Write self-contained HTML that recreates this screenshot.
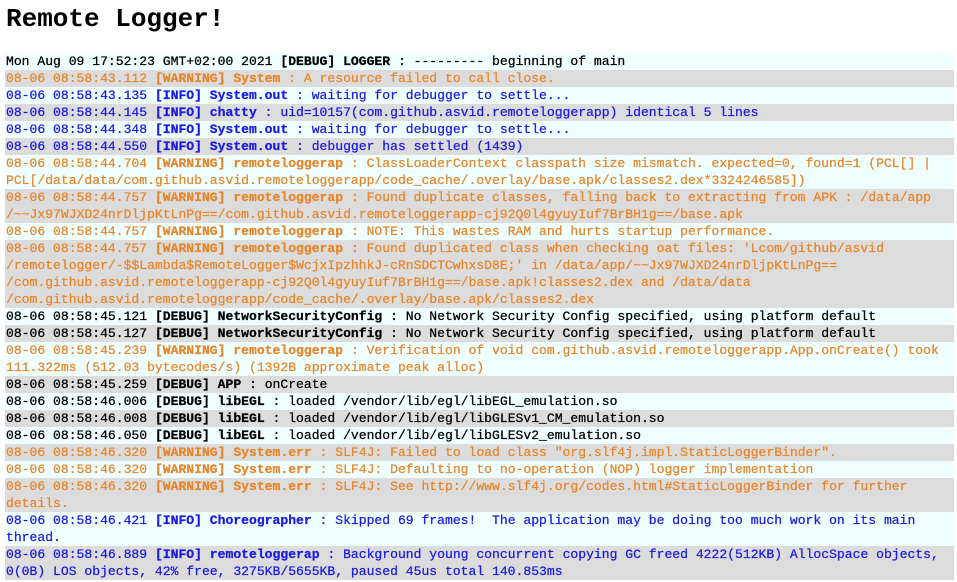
<!DOCTYPE html>
<html><head><meta charset="utf-8"><style>
html,body{margin:0;padding:0;background:#fff;}
body{width:957px;height:582px;overflow:hidden;font-family:"Liberation Mono",monospace;}
h1{margin:0;position:absolute;left:6px;top:2px;font-size:26px;line-height:34px;font-weight:bold;color:#000;}
#log{position:absolute;left:5px;top:53px;width:949px;font-size:13.07px;line-height:17px;-webkit-text-stroke:0.25px currentColor;}
.r{padding-left:1px;white-space:pre;}
.r:nth-child(odd){background:#f0ffff;}
.r:nth-child(even){background:#dcdcdc;}
.d{color:#000}.w{color:#e8862a}.i{color:#1a1ae6}
b{font-weight:bold}
</style></head><body>
<h1>Remote Logger!</h1>
<div id="log">
<div class="r d">Mon Aug 09 17:52:23 GMT+02:00 2021 <b>[DEBUG] LOGGER</b> : --------- beginning of main</div>
<div class="r w">08-06 08:58:43.112 <b>[WARNING] System</b> : A resource failed to call close.</div>
<div class="r i">08-06 08:58:43.135 <b>[INFO] System.out</b> : waiting for debugger to settle...</div>
<div class="r i">08-06 08:58:44.145 <b>[INFO] chatty</b> : uid=10157(com.github.asvid.remoteloggerapp) identical 5 lines</div>
<div class="r i">08-06 08:58:44.348 <b>[INFO] System.out</b> : waiting for debugger to settle...</div>
<div class="r i">08-06 08:58:44.550 <b>[INFO] System.out</b> : debugger has settled (1439)</div>
<div class="r w">08-06 08:58:44.704 <b>[WARNING] remoteloggerap</b> : ClassLoaderContext classpath size mismatch. expected=0, found=1 (PCL[] |
PCL[/data/data/com.github.asvid.remoteloggerapp/code_cache/.overlay/base.apk/classes2.dex*3324246585])</div>
<div class="r w">08-06 08:58:44.757 <b>[WARNING] remoteloggerap</b> : Found duplicate classes, falling back to extracting from APK : /data/app
/~~Jx97WJXD24nrDljpKtLnPg==/com.github.asvid.remoteloggerapp-cj92Q0l4gyuyIuf7BrBH1g==/base.apk</div>
<div class="r w">08-06 08:58:44.757 <b>[WARNING] remoteloggerap</b> : NOTE: This wastes RAM and hurts startup performance.</div>
<div class="r w">08-06 08:58:44.757 <b>[WARNING] remoteloggerap</b> : Found duplicated class when checking oat files: 'Lcom/github/asvid
/remotelogger/-$$Lambda$RemoteLogger$WcjxIpzhhkJ-cRnSDCTCwhxsD8E;' in /data/app/~~Jx97WJXD24nrDljpKtLnPg==
/com.github.asvid.remoteloggerapp-cj92Q0l4gyuyIuf7BrBH1g==/base.apk!classes2.dex and /data/data
/com.github.asvid.remoteloggerapp/code_cache/.overlay/base.apk/classes2.dex</div>
<div class="r d">08-06 08:58:45.121 <b>[DEBUG] NetworkSecurityConfig</b> : No Network Security Config specified, using platform default</div>
<div class="r d">08-06 08:58:45.127 <b>[DEBUG] NetworkSecurityConfig</b> : No Network Security Config specified, using platform default</div>
<div class="r w">08-06 08:58:45.239 <b>[WARNING] remoteloggerap</b> : Verification of void com.github.asvid.remoteloggerapp.App.onCreate() took
111.322ms (512.03 bytecodes/s) (1392B approximate peak alloc)</div>
<div class="r d">08-06 08:58:45.259 <b>[DEBUG] APP</b> : onCreate</div>
<div class="r d">08-06 08:58:46.006 <b>[DEBUG] libEGL</b> : loaded /vendor/lib/egl/libEGL_emulation.so</div>
<div class="r d">08-06 08:58:46.008 <b>[DEBUG] libEGL</b> : loaded /vendor/lib/egl/libGLESv1_CM_emulation.so</div>
<div class="r d">08-06 08:58:46.050 <b>[DEBUG] libEGL</b> : loaded /vendor/lib/egl/libGLESv2_emulation.so</div>
<div class="r w">08-06 08:58:46.320 <b>[WARNING] System.err</b> : SLF4J: Failed to load class "org.slf4j.impl.StaticLoggerBinder".</div>
<div class="r w">08-06 08:58:46.320 <b>[WARNING] System.err</b> : SLF4J: Defaulting to no-operation (NOP) logger implementation</div>
<div class="r w">08-06 08:58:46.320 <b>[WARNING] System.err</b> : SLF4J: See http://www.slf4j.org/codes.html#StaticLoggerBinder for further
details.</div>
<div class="r i">08-06 08:58:46.421 <b>[INFO] Choreographer</b> : Skipped 69 frames!  The application may be doing too much work on its main
thread.</div>
<div class="r i">08-06 08:58:46.889 <b>[INFO] remoteloggerap</b> : Background young concurrent copying GC freed 4222(512KB) AllocSpace objects,
0(0B) LOS objects, 42% free, 3275KB/5655KB, paused 45us total 140.853ms</div>
</div>
</body></html>
